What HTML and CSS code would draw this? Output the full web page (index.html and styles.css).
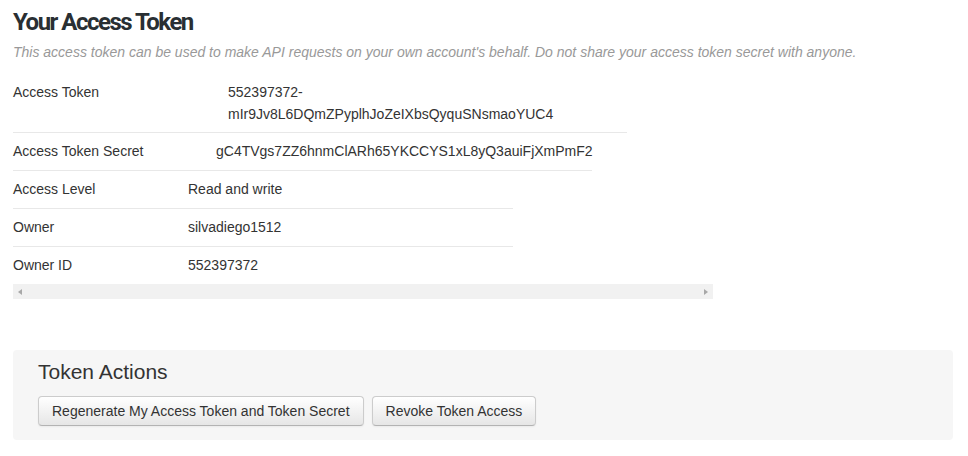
FILE: index.html
```html
<!DOCTYPE html>
<html lang="en">
  <head>
    <meta charset="UTF-8" />
    <meta name="viewport" content="width=device-width, initial-scale=1.0" />
    <title>Your Access Token</title>
    <link rel="stylesheet" href="styles.css">
  </head>
  <body>
    <div class="container">
      <h2 class="page-title">Your Access Token</h2>
      <p class="hint">This access token can be used to make API requests on your own account's behalf. Do not share your access token secret with anyone.</p>

      <div class="token-scroll">
        <div class="token-rows">
          <div class="row row-token">
            <span class="label">Access Token</span>
            <span class="value">552397372-mIr9Jv8L6DQmZPyplhJoZeIXbsQyquSNsmaoYUC4</span>
          </div>
          <div class="row row-secret">
            <span class="label">Access Token Secret</span>
            <span class="value nowrap">gC4TVgs7ZZ6hnmClARh65YKCCYS1xL8yQ3auiFjXmPmF2</span>
          </div>
          <div class="row row-short">
            <span class="label">Access Level</span>
            <span class="value">Read and write</span>
          </div>
          <div class="row row-short">
            <span class="label">Owner</span>
            <span class="value">silvadiego1512</span>
          </div>
          <div class="row row-short">
            <span class="label">Owner ID</span>
            <span class="value">552397372</span>
          </div>
        </div>
        <!-- horizontal scrollbar -->
        <div class="scrollbar">
          <span class="arrow arrow-left"></span>
          <span class="arrow arrow-right"></span>
        </div>
      </div>

      <div class="well">
        <h3 class="well-title">Token Actions</h3>
        <div class="actions">
          <button class="btn">Regenerate My Access Token and Token Secret</button>
          <button class="btn">Revoke Token Access</button>
        </div>
      </div>
    </div>
  </body>
</html>
```

FILE: styles.css
```css
body {
  margin: 0;
  background: #fff;
  color: #333;
  font-family: "Liberation Sans", Arial, sans-serif;
  font-size: 14px;
  line-height: 20px;
}

.container {
  width: 940px;
  padding: 0 13px;
}

.page-title {
  margin: 7px 0 5px;
  font-family: Roboto, "Liberation Sans", sans-serif;
  font-size: 24px;
  line-height: 30px;
  font-weight: bold;
  letter-spacing: -1.5px;
  color: #292f33;
}

.hint {
  margin: 0 0 12px;
  color: #999;
  font-style: italic;
}

/* tabel */
.token-scroll {
  width: 700px;
}

.row {
  display: flex;
  border-bottom: 1px solid #e8e8e8;
}

.row:last-child {
  border-bottom: none;
}

.label,
.value {
  padding: 7px 0;
  line-height: 23px;
}

.row-token {
  width: 614px;
}

.row-token .label {
  width: 215px;
  flex: none;
}

.row-token .value {
  padding-right: 40px;
  line-height: 22px;
}

.row-secret {
  width: 579px;
}

.row-secret .label {
  width: 203px;
  flex: none;
}

.row-short {
  width: 500px;
}

.row-short .label {
  width: 175px;
  flex: none;
}

.nowrap {
  white-space: nowrap;
}

.scrollbar {
  height: 15px;
  background: #f1f1f1;
  display: flex;
  justify-content: space-between;
  align-items: center;
  padding: 0 5px;
}

.arrow {
  width: 0;
  height: 0;
  border-top: 3.5px solid transparent;
  border-bottom: 3.5px solid transparent;
}

.arrow-left {
  border-right: 4px solid #a8a8a8;
}

.arrow-right {
  border-left: 4px solid #a8a8a8;
}

/* Token Actions */
.well {
  margin-top: 51px;
  background: #f6f6f6;
  border-radius: 4px;
  padding: 10px 24px 14px 25px;
}

.well-title {
  margin: 0 0 12px;
  font-size: 21px;
  line-height: 24px;
  font-weight: normal;
  color: #333;
}

.actions {
  display: flex;
  gap: 8px;
}

.btn {
  font-family: "Liberation Sans", Arial, sans-serif;
  font-size: 14px;
  line-height: 20px;
  color: #333;
  padding: 4px 13px;
  border: 1px solid #ccc;
  border-bottom-color: #b3b3b3;
  border-radius: 4px;
  background: linear-gradient(#fff, #e6e6e6);
  box-shadow: inset 0 1px 0 rgba(255, 255, 255, 0.2), 0 1px 2px rgba(0, 0, 0, 0.05);
  cursor: pointer;
}
```
